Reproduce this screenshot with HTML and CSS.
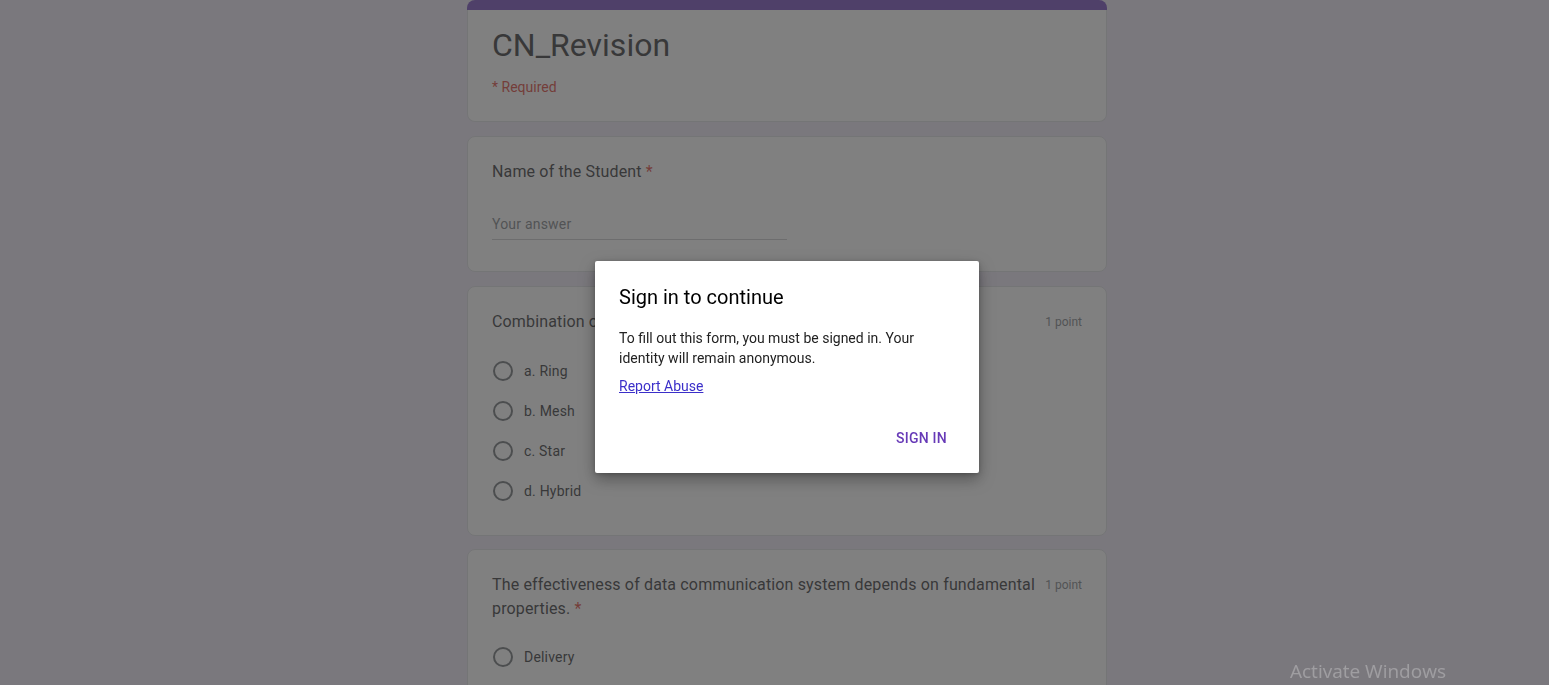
FILE: index.html
```html
<!DOCTYPE html>
<html lang="en">
<head>
<meta charset="utf-8">
<title>CN_Revision</title>
<link rel="stylesheet" href="styles.css">
</head>
<body>
<div class="page">
  <main class="form">
    <section class="header">
      <div class="stripe"></div>
      <div class="header-body">
        <h1 class="form-title">CN_Revision</h1>
        <div class="required-note">* Required</div>
      </div>
    </section>

    <section class="card">
      <div class="q-head">
        <div class="q-title">Name of the Student <span class="ast">*</span></div>
      </div>
      <div class="answer">
        <span class="placeholder">Your answer</span>
      </div>
    </section>

    <section class="card card-mc">
      <div class="q-head">
        <div class="q-title">Combination of two or more topologies are called</div>
        <div class="points">1 point</div>
      </div>
      <div class="options">
        <div class="option"><span class="radio"></span><span class="opt-label">a. Ring</span></div>
        <div class="option"><span class="radio"></span><span class="opt-label">b. Mesh</span></div>
        <div class="option"><span class="radio"></span><span class="opt-label">c. Star</span></div>
        <div class="option"><span class="radio"></span><span class="opt-label">d. Hybrid</span></div>
      </div>
    </section>

    <section class="card card-last">
      <div class="q-head">
        <div class="q-title">The effectiveness of data communication system depends on fundamental properties. <span class="ast">*</span></div>
        <div class="points">1 point</div>
      </div>
      <div class="options">
        <div class="option"><span class="radio"></span><span class="opt-label">Delivery</span></div>
      </div>
    </section>
  </main>
</div>

<div class="scrim"></div>

<div class="dialog-layer">
  <div class="dialog" role="dialog">
    <h2 class="dialog-title">Sign in to continue</h2>
    <p class="dialog-text">To fill out this form, you must be signed in. Your identity will remain anonymous.</p>
    <a class="dialog-link" href="#">Report Abuse</a>
    <div class="dialog-actions">
      <button class="btn-text" type="button">Sign in</button>
    </div>
  </div>
</div>

<div class="watermark">Activate Windows</div>
</body>
</html>
```

FILE: styles.css
```css
html, body {
  margin: 0;
  padding: 0;
  overflow: hidden;
  height: 100%;
}

body {
  background: #ede7f6;
  font-family: Roboto, "Liberation Sans", Arial, sans-serif;
  color: #202124;
}

.page {
  padding-left: 25px;
}

.form {
  width: 640px;
  margin: 0 auto;
}

/* Header card */
.header {
  display: flex;
  flex-direction: column;
}

.stripe {
  height: 10px;
  background: #673ab7;
  border-radius: 8px 8px 0 0;
}

.header-body {
  background: #fff;
  border: 1px solid #dadce0;
  border-top: none;
  border-radius: 0 0 8px 8px;
  padding: 15px 24px 24px;
}

.form-title {
  margin: 0;
  font-family: Roboto, "Liberation Sans", sans-serif;
  font-weight: 400;
  font-size: 32px;
  line-height: 40px;
  color: #202124;
}

.required-note {
  margin-top: 12px;
  font-size: 14px;
  line-height: 20px;
  color: #d93025;
}

/* Question cards */
.card {
  background: #fff;
  border: 1px solid #dadce0;
  border-radius: 8px;
  padding: 23px 24px 24px;
  margin-top: 14px;
}

.card-last {
  margin-top: 13px;
}

.q-head {
  display: flex;
  align-items: flex-start;
  gap: 5px;
}

.q-title {
  flex: 1;
  font-size: 16px;
  line-height: 24px;
  letter-spacing: 0.15px;
  color: #202124;
}

.ast {
  color: #d93025;
}

.points {
  font-size: 12px;
  line-height: 24px;
  color: #70757a;
  white-space: nowrap;
}

.answer {
  width: 295px;
  margin-top: 16px;
  padding-top: 14px;
  padding-bottom: 5px;
  border-bottom: 1px solid #c4c4c6;
  margin-bottom: 7px;
}

.placeholder {
  display: block;
  font-size: 14px;
  line-height: 20px;
  color: #70757a;
  letter-spacing: 0.2px;
}

.options {
  margin-top: 16px;
  display: flex;
  flex-direction: column;
}

.card-mc .options {
  margin-top: 17px;
}

.option {
  height: 40px;
  display: flex;
  align-items: center;
  gap: 11px;
}

.radio {
  width: 16px;
  height: 16px;
  border: 2px solid #5f6368;
  border-radius: 50%;
  margin-left: 1px;
}

.opt-label {
  font-size: 14px;
  letter-spacing: 0.2px;
  color: #202124;
}

/* Overlay */
.scrim {
  position: fixed;
  inset: 0;
  background: rgba(68, 68, 68, 0.68);
}

.dialog-layer {
  position: fixed;
  inset: 0;
  padding-left: 25px;
  padding-top: 261px;
  display: flex;
  justify-content: center;
  align-items: flex-start;
}

.dialog {
  width: 384px;
  box-sizing: border-box;
  background: #fff;
  border-radius: 2px;
  box-shadow: 0 6px 16px rgba(0, 0, 0, 0.35), 0 1px 4px rgba(0, 0, 0, 0.2);
  padding: 22px 24px 0;
}

.dialog-title {
  margin: 0;
  font-size: 20px;
  font-weight: 400;
  line-height: 28px;
  color: #000;
}

.dialog-text {
  margin: 17px 0 0;
  font-size: 14px;
  line-height: 20px;
  color: #222;
}

.dialog-link {
  display: inline-block;
  margin-top: 8px;
  font-size: 14px;
  line-height: 20px;
  color: #3b2fc9;
  text-decoration: underline;
}

.dialog-actions {
  display: flex;
  justify-content: flex-end;
  margin-top: 24px;
  padding-bottom: 17px;
}

.btn-text {
  height: 36px;
  padding: 0 8px;
  border: none;
  background: transparent;
  font-family: Roboto, "Liberation Sans", sans-serif;
  font-size: 14px;
  font-weight: 500;
  letter-spacing: 0.25px;
  text-transform: uppercase;
  color: #673ab7;
}

.watermark {
  position: fixed;
  left: 1290px;
  top: 658px;
  font-family: "Open Sans", "Liberation Sans", sans-serif;
  font-size: 19px;
  line-height: 26px;
  color: rgba(255, 255, 255, 0.28);
}
```
